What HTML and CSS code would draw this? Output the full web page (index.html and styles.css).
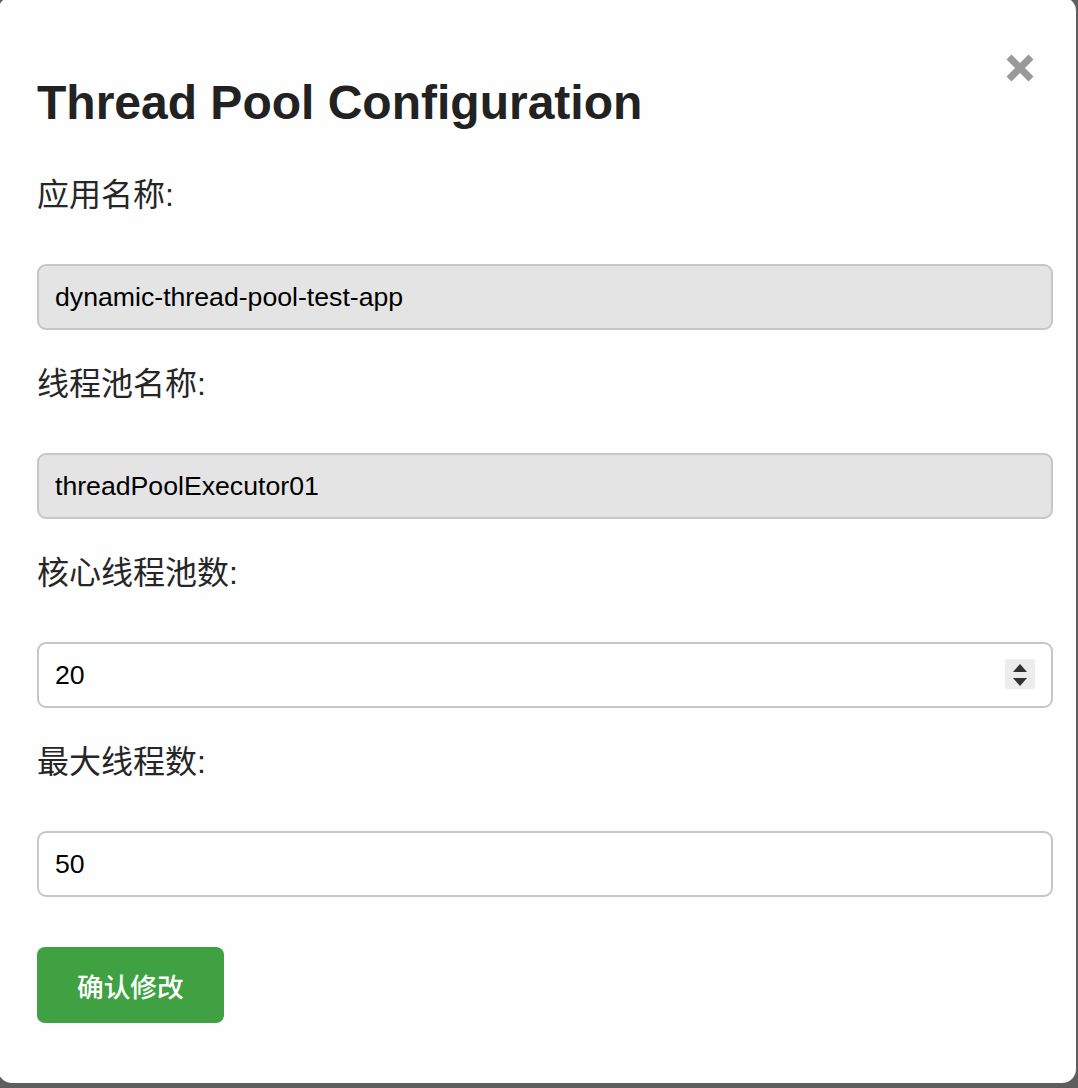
FILE: index.html
```html
<!DOCTYPE html>
<html lang="zh">
<head>
<meta charset="utf-8">
<title>Thread Pool Configuration</title>
<link rel="stylesheet" href="styles.css">
</head>
<body>
<div class="modal">
  <button class="close" aria-label="close">
    <svg width="30" height="30" viewBox="0 0 30 30"><path d="M4 4 L26 26 M26 4 L4 26" stroke="#999" stroke-width="7" stroke-linecap="butt" fill="none"/></svg>
  </button>
  <h2 class="title">Thread Pool Configuration</h2>
  <form class="form">
    <label class="label label-first">应用名称:</label>
    <input class="input readonly" type="text" value="dynamic-thread-pool-test-app" readonly>
    <label class="label">线程池名称:</label>
    <input class="input readonly" type="text" value="threadPoolExecutor01" readonly>
    <label class="label">核心线程池数:</label>
    <div class="num-wrap">
      <input class="input" type="text" value="20">
      <span class="spin">
        <svg width="30" height="30" viewBox="0 0 30 30"><path d="M8 13 L15 5 L22 13 Z M8 19 L22 19 L15 27 Z" fill="#333"/></svg>
      </span>
    </div>
    <label class="label">最大线程数:</label>
    <input class="input" type="text" value="50">
    <button class="submit" type="button">确认修改</button>
  </form>
</div>
</body>
</html>
```
FILE: styles.css
```css
html, body {
  margin: 0;
  padding: 0;
  background: #5e5e5e;
  overflow: hidden;
}
.modal {
  position: relative;
  box-sizing: border-box;
  width: 1078px;
  height: 1086px;
  margin: -3px 0 0 -2px;
  padding: 78px 0 0 39px;
  background: #fefefe;
  border-radius: 14px;
}
.close {
  position: absolute;
  top: 56px;
  left: 1007px;
  width: 30px;
  height: 30px;
  padding: 0;
  border: 0;
  background: none;
}
.close svg { display: block; }
.title {
  margin: 0;
  font-family: "Liberation Sans", Arial, sans-serif;
  font-weight: bold;
  font-size: 48px;
  line-height: 56px;
  color: #222;
}
.form {
  display: flex;
  flex-direction: column;
  align-items: flex-start;
}
.label {
  display: block;
  margin: 32px 0 47px;
  font-family: "Liberation Sans", "Noto Sans CJK SC", sans-serif;
  font-size: 32px;
  line-height: 44px;
  color: #262626;
}
.label-first { margin-top: 42px; }
.input {
  box-sizing: border-box;
  width: 1016px;
  height: 66px;
  margin: 0;
  padding: 0 16px;
  border: 2px solid #c6c6c6;
  border-radius: 9px;
  background: #fff;
  font-family: "Liberation Sans", Arial, sans-serif;
  font-size: 26.67px;
  color: #000;
  outline: none;
}
.readonly { background: #e4e4e4; }
.num-wrap {
  position: relative;
  width: 1016px;
}
.spin {
  position: absolute;
  top: 17px;
  right: 18px;
  width: 30px;
  height: 30px;
  background: #ececec;
  border-radius: 2px;
}
.spin svg { display: block; }
.submit {
  margin-top: 50px;
  height: 76px;
  padding: 0 40px;
  border: 0;
  border-radius: 8px;
  background: #3fa142;
  color: #fff;
  font-family: "Noto Sans CJK SC", sans-serif;
  font-size: 26.67px;
  font-weight: 500;
}
```
